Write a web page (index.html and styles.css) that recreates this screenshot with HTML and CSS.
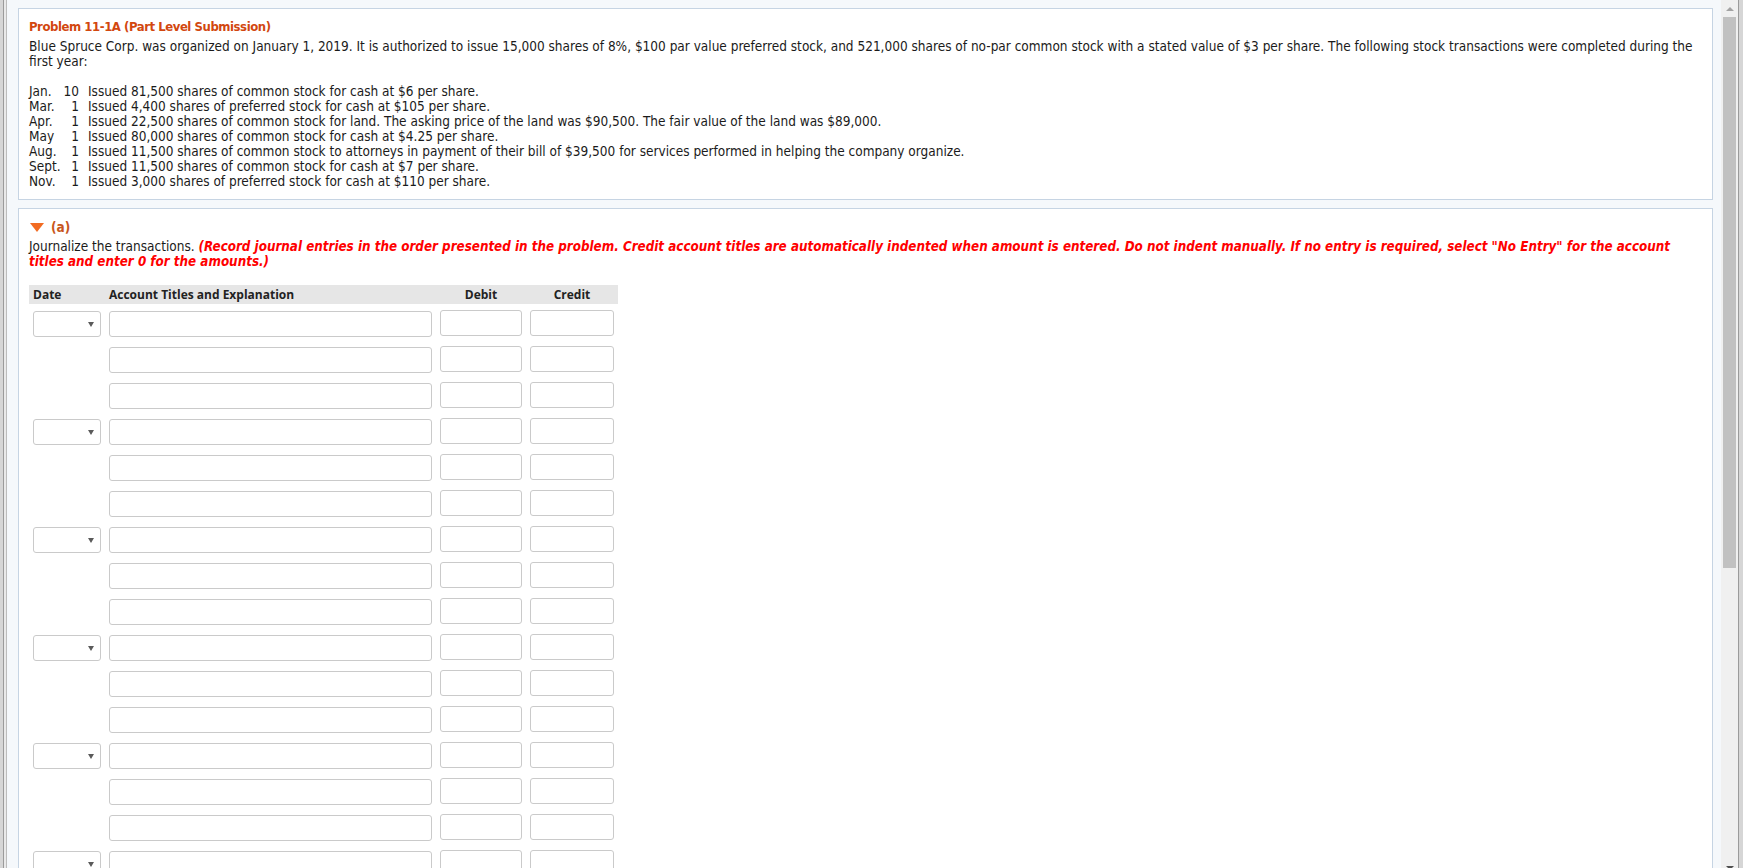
FILE: index.html
```html
<!DOCTYPE html>
<html lang="en">
<head>
    <meta charset="UTF-8">
    <meta name="viewport" content="width=device-width, initial-scale=1.0">
    <title>Problem 11-1A</title>
    <link rel="stylesheet" href="styles.css">
</head>
<body>

<div class="frame">
    <div class="edge"></div>

    <div class="content">
        <div class="card">
            <h2 class="title">Problem 11-1A (Part Level Submission)</h2>
            <p class="intro">Blue Spruce Corp. was organized on January 1, 2019. It is authorized to issue 15,000 shares of 8%, $100 par value preferred stock, and 521,000 shares of no-par common stock with a stated value of $3 per share. The following stock transactions were completed during the first year:</p>
            <table class="txn">
                <tr><td>Jan.</td><td class="day">10</td><td>Issued 81,500 shares of common stock for cash at $6 per share.</td></tr>
                <tr><td>Mar.</td><td class="day">1</td><td>Issued 4,400 shares of preferred stock for cash at $105 per share.</td></tr>
                <tr><td>Apr.</td><td class="day">1</td><td>Issued 22,500 shares of common stock for land. The asking price of the land was $90,500. The fair value of the land was $89,000.</td></tr>
                <tr><td>May</td><td class="day">1</td><td>Issued 80,000 shares of common stock for cash at $4.25 per share.</td></tr>
                <tr><td>Aug.</td><td class="day">1</td><td>Issued 11,500 shares of common stock to attorneys in payment of their bill of $39,500 for services performed in helping the company organize.</td></tr>
                <tr><td>Sept.</td><td class="day">1</td><td>Issued 11,500 shares of common stock for cash at $7 per share.</td></tr>
                <tr><td>Nov.</td><td class="day">1</td><td>Issued 3,000 shares of preferred stock for cash at $110 per share.</td></tr>
            </table>
        </div>

        <div class="card">
            <div class="part-head"><span class="caret"></span>(a)</div>
            <p class="task">Journalize the transactions. <em>(Record journal entries in the order presented in the problem. Credit account titles are automatically indented when amount is entered. Do not indent manually. If no entry is required, select "No Entry" for the account titles and enter 0 for the amounts.)</em></p>

            <div class="journal">
                <div class="jhead">
                    <span>Date</span>
                    <span>Account Titles and Explanation</span>
                    <span class="num">Debit</span>
                    <span class="num">Credit</span>
                </div>
                <div class="jrows" id="jrows"></div>
            </div>
        </div>
    </div>

    <div class="scrollbar">
        <div class="sb-btn"><span class="arrow-up"></span></div>
        <div class="sb-thumb"></div>
        <div class="sb-space"></div>
        <div class="sb-btn"><span class="arrow-down"></span></div>
    </div>
</div>

<script>
    // 16 journal lines, a date picker on the first line of every entry
    const rows = document.getElementById('jrows');
    for (let i = 0; i < 16; i++) {
        const row = document.createElement('div');
        row.className = 'jrow';
        const date = i % 3 === 0
            ? '<div class="select"><span class="select-arrow"></span></div>'
            : '<div></div>';
        row.innerHTML = date +
            '<input type="text" class="field">' +
            '<input type="text" class="field amount">' +
            '<input type="text" class="field amount">';
        rows.appendChild(row);
    }
</script>

</body>
</html>
```

FILE: styles.css
```css
* {
    box-sizing: border-box;
}
html, body {
    margin: 0;
    height: 100%;
    overflow: hidden;
}
body {
    background-color: #d6d6d6;
    font-family: "DejaVu Sans Condensed", "DejaVu Sans", sans-serif;
    font-size: 13.5px;
    color: #1b1b1b;
}
.frame {
    display: flex;
    width: 1736px;
    height: 876px;
    margin-left: 3px;
    border-left: 1px solid #9b9b9b;
    border-right: 1px solid #9b9b9b;
}
.edge {
    width: 3px;
    background-color: #e9e9e9;
    border-right: 1px solid #bcbcbc;
}
.content {
    flex: 1;
    background-color: #f5f8fb; /* pale blue page */
    padding: 8px 8px 0 11px;
}
.card {
    background-color: #fff;
    border: 1px solid #c6d4e3;
    padding: 10px 10px 10px 10px;
}
.card + .card {
    margin-top: 8px;
}
.title {
    margin: 0 0 4px 0;
    font-size: 13px;
    letter-spacing: -0.45px;
    line-height: 16px;
    font-weight: bold;
    color: #d2470f;
}
.intro {
    margin: 0 0 15px 0;
    line-height: 15px;
}
.txn {
    border-collapse: collapse;
    line-height: 15px;
}
.txn td {
    padding: 0;
    vertical-align: top;
    white-space: nowrap;
}
.txn .day {
    text-align: right;
    padding: 0 9px 0 3px;
}
.part-head {
    display: flex;
    align-items: center;
    font-size: 13.5px;
    line-height: 16px;
    font-weight: bold;
    color: #c8561c;
}
.caret {
    width: 0;
    height: 0;
    margin: 1px 7px 0 1px;
    border-left: 7px solid transparent;
    border-right: 7px solid transparent;
    border-top: 9px solid #f26b22;
}
.task {
    margin: 4px 0 0 0;
    line-height: 15px;
}
.task em {
    font-size: 13.3px;
    color: #ff0000;
    font-weight: bold;
    font-style: italic;
}
.journal {
    width: 589px;
    margin-top: 16px;
}
.jhead, .jrow {
    display: grid;
    grid-template-columns: 68px 323px 82px 84px;
    column-gap: 8px;
    padding: 0 4px;
}
.jhead {
    height: 19px;
    align-items: center;
    background-color: #e6e6e6;
    font-family: "Open Sans", sans-serif;
    font-size: 12px;
    font-weight: bold;
    color: #222;
}
.jhead .num {
    text-align: center;
}
.jrows {
    padding-top: 2px;
}
.jrow {
    height: 36px;
    align-items: center;
}
.field {
    height: 26px;
    margin: 0;
    border: 1px solid #cacaca;
    border-radius: 3px;
    background-color: #fff;
    outline: none;
}
.field.amount {
    margin-bottom: 2px;
}
.select {
    height: 26px;
    display: flex;
    align-items: center;
    justify-content: flex-end;
    padding-right: 6px;
    border: 1px solid #cacaca;
    border-radius: 3px;
    background-color: #fff;
}
.select-arrow {
    width: 0;
    height: 0;
    border-left: 3px solid transparent;
    border-right: 3px solid transparent;
    border-top: 5px solid #5a5a5a;
}
.scrollbar {
    width: 17px;
    display: flex;
    flex-direction: column;
    align-items: center;
    background-color: #f0f0f0;
}
.sb-btn {
    height: 17px;
    width: 100%;
    display: flex;
    align-items: center;
    justify-content: center;
}
.sb-thumb {
    width: 13px;
    height: 551px;
    background-color: #c1c1c1;
}
.sb-space {
    flex: 1;
}
.arrow-up {
    width: 0;
    height: 0;
    border-left: 4px solid transparent;
    border-right: 4px solid transparent;
    border-bottom: 4px solid #a3a3a3;
}
.arrow-down {
    width: 0;
    height: 0;
    border-left: 4px solid transparent;
    border-right: 4px solid transparent;
    border-top: 4px solid #505050;
}
```
